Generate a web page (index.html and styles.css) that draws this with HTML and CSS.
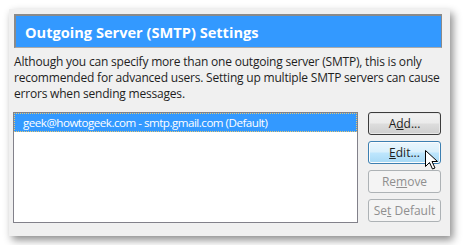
FILE: index.html
```html
<!DOCTYPE html>
<html lang="en">

<head>
  <meta charset="UTF-8">
  <title>Outgoing Server (SMTP) Settings</title>
  <link rel="stylesheet" href="styles.css">
</head>

<body>
  <div class="dialog">
    <div class="title">Outgoing Server (SMTP) Settings</div>
    <p class="desc">Although you can specify more than one outgoing server (SMTP), this is only recommended for advanced users. Setting up multiple SMTP servers can cause errors when sending messages.</p>
    <div class="main">
      <div class="list">
        <div class="item">geek@howtogeek.com - smtp.gmail.com (Default)</div>
      </div>
      <div class="buttons">
        <button class="btn default">A<u>d</u>d...</button>
        <button class="btn hover"><u>E</u>dit...
          <svg class="cursor" width="13" height="20" viewBox="0 0 13 20">
            <path d="M0.5 0.5 L0.5 16.5 L4.5 12.5 L7.5 19 L10 18 L7 11.5 L12.5 11.5 Z" fill="#fff" stroke="#000" stroke-width="1" stroke-linejoin="miter" />
          </svg>
        </button>
        <button class="btn disabled">Re<u>m</u>ove</button>
        <button class="btn disabled">Se<u>t</u> Default</button>
      </div>
    </div>
  </div>
</body>

</html>
```

FILE: styles.css
```css
body {
  margin: 0;
  background: #fff;
  font-family: "Open Sans", "Noto Sans", sans-serif;
  font-size: 12px;
  color: #1e1e1e;
}

.dialog {
  margin: 9px;
  width: 441px;
  height: 227px;
  box-sizing: border-box;
  padding: 5px 8px 0 4px;
  background: #f0f0f0;
  box-shadow: 3px 4px 8px rgba(0, 0, 0, 0.45);
}

.title {
  margin-left: 1px;
  height: 34px;
  box-sizing: border-box;
  padding: 0 0 0 9px;
  background: #3399ff;
  border: 2px solid #8a8a8a;
  border-right-width: 1px;
  border-bottom-width: 1px;
  border-bottom-color: #aaa;
  color: #fff;
  font-weight: bold;
  font-size: 14.6px;
  line-height: 32px;
}

.desc {
  margin: 6px -8px 0 1px;
  line-height: 16px;
  letter-spacing: -0.2px;
}

.main {
  display: flex;
  gap: 10px;
  margin-top: 10px;
}

.list {
  width: 345px;
  height: 111px;
  box-sizing: border-box;
  background: #fff;
  border: 1px solid #82818a;
}

.item {
  height: 19px;
  box-sizing: border-box;
  padding-left: 8px;
  background: #3399ff;
  border: 1px dotted #e8c870;
  color: #fff;
  font-size: 11.6px;
  line-height: 17px;
  letter-spacing: -0.5px;
}

.buttons {
  display: flex;
  flex-direction: column;
  gap: 6px;
}

.btn {
  position: relative;
  width: 73px;
  height: 23px;
  padding: 0;
  border-radius: 3px;
  font-family: inherit;
  font-size: 12px;
  color: #1e1e1e;
  border: 1px solid #707070;
  background: linear-gradient(#f2f2f2 0%, #ebebeb 48%, #dddddd 52%, #cfcfcf 100%);
  box-shadow: inset 0 0 0 1px #fcfcfc;
}

.btn.default {
  border-color: #3c3c3c;
  box-shadow: inset 0 0 0 1px #e8e8e8;
}

.btn.hover {
  border-color: #3c7fb1;
  background: linear-gradient(#eaf6fd 0%, #d9f0fc 48%, #bee6fd 52%, #a7d9f5 100%);
}

.btn.disabled {
  color: #8f8f8f;
  border-color: #adb2b5;
  background: #f4f4f4;
  box-shadow: none;
}

.cursor {
  position: absolute;
  left: 56px;
  top: 8px;
}
```
